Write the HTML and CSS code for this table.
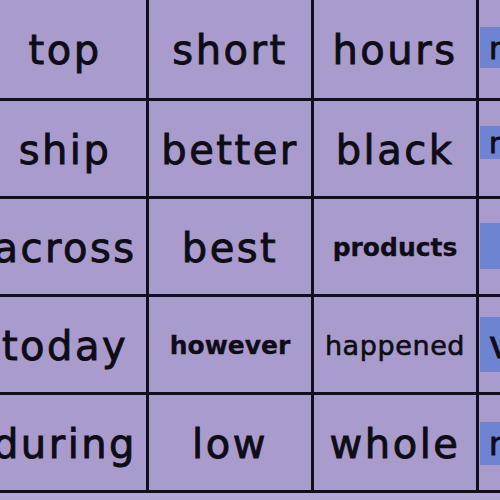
FILE: index.html
```html
<!DOCTYPE html>
<html lang="en">
<head>
<meta charset="utf-8">
<title>Word grid</title>
<link rel="stylesheet" href="styles.css">
</head>
<body>
<div class="grid">
  <div class="cell">top</div>
  <div class="cell">short</div>
  <div class="cell">hours</div>
  <div class="cell side"><span class="hl hl-1">money</span></div>

  <div class="cell">ship</div>
  <div class="cell">better</div>
  <div class="cell">black</div>
  <div class="cell side"><span class="hl hl-2">red</span></div>

  <div class="cell">across</div>
  <div class="cell">best</div>
  <div class="cell bold">products</div>
  <div class="cell side"><span class="hl hl-3">&nbsp;</span></div>

  <div class="cell">today</div>
  <div class="cell bold">however</div>
  <div class="cell small">happened</div>
  <div class="cell side"><span class="hl hl-4">very</span></div>

  <div class="cell">during</div>
  <div class="cell">low</div>
  <div class="cell">whole</div>
  <div class="cell side"><span class="hl hl-5">rather</span></div>
</div>
</body>
</html>
```
FILE: styles.css
```css
html, body {
  margin: 0;
  padding: 0;
  width: 500px;
  height: 500px;
  overflow: hidden;
  background: #b3a7d3;
}

.grid {
  display: grid;
  grid-template-columns: repeat(4, 162px);
  grid-template-rows: 98px repeat(4, 95px);
  gap: 3px;
  padding-bottom: 3px;
  margin-left: -16px;
  width: max-content;
  background: #120e1c;
}

.cell {
  display: flex;
  justify-content: center;
  align-items: center;
  padding-top: 2px;
  box-sizing: border-box;
  background: #a99bcc;
  color: #0e0c16;
  font-family: "DejaVu Sans", sans-serif;
  font-size: 40px;
  letter-spacing: 2.5px;
  -webkit-text-stroke: 0.9px #0e0c16;
  white-space: nowrap;
  overflow: hidden;
}

.cell.bold {
  font-weight: bold;
  font-size: 25px;
  letter-spacing: 0;
  -webkit-text-stroke: 0.3px #0e0c16;
}

.cell.small {
  font-size: 27px;
  letter-spacing: 0.6px;
  -webkit-text-stroke: 0.6px #0e0c16;
}

.cell.side {
  justify-content: flex-start;
  align-items: flex-start;
  padding: 0 0 0 1px;
}

.hl {
  display: flex;
  align-items: center;
  width: 100%;
  padding-left: 9px;
  box-sizing: border-box;
  background: #6d84d3;
  letter-spacing: 1px;
}

.hl-1 { margin-top: 27px; height: 41px; font-size: 31px; }
.hl-2 { margin-top: 25px; height: 33px; font-size: 29px; }
.hl-3 { margin-top: 24px; height: 46px; font-size: 30px; }
.hl-4 { margin-top: 20px; height: 55px; font-size: 38px; }
.hl-5 { margin-top: 27px; height: 43px; font-size: 32px; }
```
